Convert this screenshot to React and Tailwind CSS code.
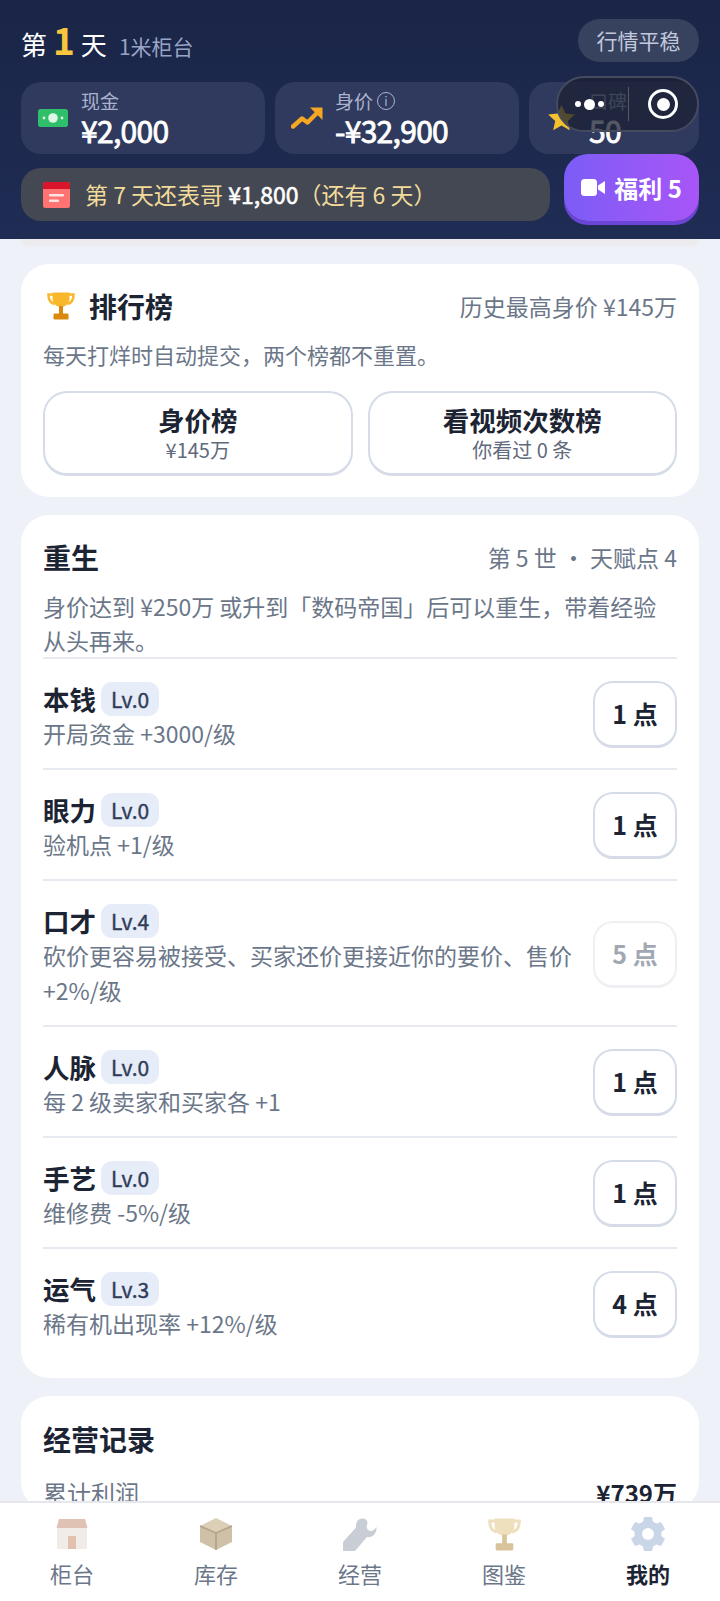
const FONT = '[font-family:"Noto_Sans_CJK_SC","Noto_Sans",sans-serif]'

function MoneyIcon() {
    return (
        <svg width="30" height="18" viewBox="0 0 30 18">
            <rect width="30" height="18" rx="2.5" fill="#2fbf6b" />
            <circle cx="15" cy="9" r="4.8" fill="#dff5e6" />
            <circle cx="6" cy="9" r="1.4" fill="#dff5e6" />
            <circle cx="24" cy="9" r="1.4" fill="#dff5e6" />
        </svg>
    )
}

function TrendIcon() {
    return (
        <svg width="32" height="22" viewBox="0 0 32 22" fill="none">
            <path d="M2 19.5 L11 11.5 L16.5 15.5 L27 5" stroke="#f5a623" strokeWidth="4.4" strokeLinecap="round" strokeLinejoin="round" />
            <path d="M19 0.5 H31.5 V13 Z" fill="#f5a623" />
        </svg>
    )
}

function StarIcon() {
    return (
        <svg width="27" height="26" viewBox="0 0 27 26">
            <path d="M13.5 0 L17.4 8.6 L26.8 9.6 L19.8 16 L21.8 25.3 L13.5 20.5 L5.2 25.3 L7.2 16 L0.2 9.6 L9.6 8.6 Z" fill="#f5c22e" />
        </svg>
    )
}

function CalendarIcon() {
    return (
        <svg width="27" height="26" viewBox="0 0 27 26">
            <rect y="0" width="27" height="26" rx="2.5" fill="#ff7373" />
            <path d="M0 2.5 A2.5 2.5 0 0 1 2.5 0 H24.5 A2.5 2.5 0 0 1 27 2.5 V7 H0 Z" fill="#d9142b" />
            <rect x="6" y="12" width="15" height="2.6" rx="1" fill="#ffe3e3" />
            <rect x="6" y="17.5" width="10" height="2.6" rx="1" fill="#ffe3e3" />
        </svg>
    )
}

function VideoIcon() {
    return (
        <svg width="24" height="17" viewBox="0 0 24 17">
            <rect width="16" height="17" rx="3.5" fill="#fff" />
            <path d="M17 6.5 L24 2 V15 L17 10.5 Z" fill="#fff" />
        </svg>
    )
}

function TrophyIcon({ cup = '#f9b82c', base = '#d98a0c', size = 28 }) {
    return (
        <svg width={size} height={size} viewBox="0 0 28 28" fill="none">
            <path d="M6 2.5 H1.5 C1.5 8 3 11 7.5 12 M22 2.5 H26.5 C26.5 8 25 11 20.5 12" stroke={cup} strokeWidth="2.6" />
            <path d="M5.5 0.5 H22.5 V6 C22.5 11.5 19 15 14 15 C9 15 5.5 11.5 5.5 6 Z" fill={cup} />
            <rect x="12" y="14" width="4" height="8" fill={base} />
            <rect x="6.5" y="21.5" width="15" height="6" rx="1.2" fill={base} />
        </svg>
    )
}

function StoreIcon() {
    return (
        <svg width="32" height="30" viewBox="0 0 32 30">
            <rect x="1" y="8" width="30" height="22" fill="#f2ece8" />
            <path d="M3 0 H29 L31.5 9 H0.5 Z" fill="#dfc2b4" />
            <rect x="12" y="17" width="8" height="13" fill="#e2c0ae" />
        </svg>
    )
}

function BoxIcon() {
    return (
        <svg width="32" height="32" viewBox="0 0 32 32">
            <path d="M16 0 L32 8 L16 15 L0 8 Z" fill="#dccfb8" />
            <path d="M0 8 L16 15 V32 L0 24 Z" fill="#cfc0a8" />
            <path d="M32 8 L16 15 V32 L32 24 Z" fill="#cfc0a8" />
            <path d="M0 8 L16 15 L32 8 M16 15 V32" stroke="#b3a48e" strokeWidth="1.8" fill="none" />
        </svg>
    )
}

function WrenchIcon() {
    return (
        <svg width="34" height="33" viewBox="0 0 34 33">
            <path d="M0 24 L13 9.5 C12.5 4 15 0.5 19.5 0.5 C23.5 0.5 25.5 3.5 24 7 C23 10 24.5 13 27.5 13 C30 13 32 11 33.5 9 C34 15 30 20 24 19 L12 33 H0 Z" fill="#c9ced6" />
        </svg>
    )
}

function GearIcon() {
    return (
        <svg width="34" height="34" viewBox="0 0 34 34">
            <path fillRule="evenodd" fill="#c9d6e8" d="M13 0 H21 L22 4.6 L25.4 6.5 L30 5 L34 12 L30.4 15 V19 L34 22 L30 29 L25.4 27.5 L22 29.4 L21 34 H13 L12 29.4 L8.6 27.5 L4 29 L0 22 L3.6 19 V15 L0 12 L4 5 L8.6 6.5 L12 4.6 Z M17 11 A6 6 0 1 0 17 23 A6 6 0 1 0 17 11 Z" />
        </svg>
    )
}

function Stat({ icon, label, value, info, className }) {
    return (
        <div className={`flex h-[72px] items-center rounded-[20px] bg-[#2f3a5e] ${className}`}>
            <div className="flex w-[60px] shrink-0 justify-center pl-[4px]">{icon}</div>
            <div className="flex flex-col">
                <div className="flex h-[24px] items-center gap-[4px] text-[19px] leading-[24px] text-[#a9b3cf]">
                    {label}
                    {info && (
                        <span className="flex h-[18px] w-[18px] items-center justify-center rounded-full border border-[#a9b3cf] text-[12px] leading-none">i</span>
                    )}
                </div>
                <div className="text-[30px] leading-[34px] font-normal tracking-[-0.7px] text-white [-webkit-text-stroke:0.8px_white]">{value}</div>
            </div>
        </div>
    )
}

function Skill({ name, lv, desc, cost, off, first }) {
    return (
        <div className={`flex items-center justify-between border-[#e6e9ef] pt-[23px] pb-[17px] ${first ? '' : 'border-t-2'}`}>
            <div className="min-w-0 flex-1 pr-[20px]">
                <div className="flex items-center gap-[5px]">
                    <span className="text-[26.5px] leading-[34px] font-bold text-[#1c2433]">{name}</span>
                    <span className="rounded-[11px] bg-[#e6ecf8] px-[10px] text-[21px] leading-[34px] font-normal text-[#2f3c5a] [-webkit-text-stroke:0.4px_#2f3c5a]">{lv}</span>
                </div>
                <div className="text-[23px] leading-[35px] text-[#6b7789]">{desc}</div>
            </div>
            <button className={`-mt-[4px] h-[67px] w-[84px] shrink-0 rounded-[20px] bg-white text-[25px] font-bold ${off ? 'border-2 border-b-[3px] border-[#eef0f4] text-[#a2a8b2]' : 'border-2 border-b-[3px] border-[#d6dce7] text-[#1c2433]'}`}>
                {cost}
            </button>
        </div>
    )
}

function RankBtn({ title, sub }) {
    return (
        <button className="flex h-[85px] flex-1 flex-col items-center justify-center rounded-[24px] border-2 border-b-[3px] border-[#d6dce7] bg-white">
            <span className="text-[26.5px] leading-[34px] font-bold text-[#1c2433]">{title}</span>
            <span className="text-[20px] leading-[26px] text-[#5f6a7c]">{sub}</span>
        </button>
    )
}

function Tab({ icon, label, active }) {
    return (
        <div className="flex flex-1 flex-col items-center">
            <div className="flex h-[36px] items-center justify-center">{icon}</div>
            <span className={`mt-[6px] text-[22px] leading-[30px] ${active ? 'font-bold text-[#1c2433]' : 'text-[#6b7789]'}`}>{label}</span>
        </div>
    )
}

const skills = [
    { name: '本钱', lv: 'Lv.0', desc: '开局资金 +3000/级', cost: '1 点' },
    { name: '眼力', lv: 'Lv.0', desc: '验机点 +1/级', cost: '1 点' },
    { name: '口才', lv: 'Lv.4', desc: '砍价更容易被接受、买家还价更接近你的要价、售价 +2%/级', cost: '5 点', off: true },
    { name: '人脉', lv: 'Lv.0', desc: '每 2 级卖家和买家各 +1', cost: '1 点' },
    { name: '手艺', lv: 'Lv.0', desc: '维修费 -5%/级', cost: '1 点' },
    { name: '运气', lv: 'Lv.3', desc: '稀有机出现率 +12%/级', cost: '4 点' },
]

export default function App() {
    return (
        <div className={`relative flex h-[1601px] w-[720px] flex-col overflow-hidden bg-[#eef1f8] ${FONT}`}>
            <header className="relative z-10 h-[239px] shrink-0 bg-gradient-to-b from-[#1a2547] to-[#1f2c54] px-[21px] pt-[19px]">
                <div className="flex h-[43px] items-center justify-between">
                    <div className="flex items-baseline text-white">
                        <span className="text-[26px]">第</span>
                        <span className="mx-[6px] text-[37px] leading-[43px] font-bold text-[#f8c63c]">1</span>
                        <span className="text-[26px]">天</span>
                        <span className="ml-[12px] text-[21px] text-[#98a4c4]">1米柜台</span>
                    </div>
                    <div className="flex h-[43px] w-[121px] items-center justify-center rounded-full bg-[#37425f] text-[21px] text-[#c2c9dc]">行情平稳</div>
                </div>
                <div className="mt-[20px] flex gap-[10px]">
                    <Stat className="w-[244px]" icon={<MoneyIcon />} label="现金" value="¥2,000" />
                    <Stat className="w-[244px]" icon={<TrendIcon />} label="身价" value="-¥32,900" info />
                    <Stat className="flex-1" icon={<StarIcon />} label="口碑" value="50" />
                </div>
                <div className="flex items-start gap-[14px]">
                    <div className="mt-[14px] flex h-[53px] w-[529px] items-center rounded-[20px] bg-[#444852] pl-[22px]">
                        <CalendarIcon />
                        <span className="ml-[15px] text-[23px] text-[#f3dc9b]">
                            第 7 天还表哥 <b className="font-normal text-white [-webkit-text-stroke:0.6px_white]">¥1,800</b>（还有 6 天）
                        </span>
                    </div>
                    <button className="flex h-[67px] flex-1 items-center justify-center gap-[9px] rounded-[24px] bg-gradient-to-r from-[#7c5cf6] to-[#a855f7] text-[24px] font-bold text-white shadow-[0_4px_0_#6a45d6]">
                        <VideoIcon />
                        福利 5
                    </button>
                </div>
            </header>

            <main className="flex min-h-0 flex-1 flex-col gap-[18px] overflow-hidden px-[21px]">
                <div className="h-[7px] shrink-0 rounded-b-[20px] bg-[#ececee]" />

                <section className="shrink-0 rounded-[28px] bg-white px-[22px] pt-[22px] pb-[21px]">
                    <div className="flex h-[40px] items-center justify-between">
                        <div className="flex items-center gap-[14px]">
                            <span className="pl-[4px]"><TrophyIcon /></span>
                            <h2 className="text-[28px] font-bold text-[#1c2433]">排行榜</h2>
                        </div>
                        <span className="text-[23px] text-[#6b7789]">历史最高身价 ¥145万</span>
                    </div>
                    <p className="mt-[11px] text-[22px] leading-[34px] text-[#6b7789]">每天打烊时自动提交，两个榜都不重置。</p>
                    <div className="mt-[20px] flex gap-[15px]">
                        <RankBtn title="身价榜" sub="¥145万" />
                        <RankBtn title="看视频次数榜" sub="你看过 0 条" />
                    </div>
                </section>

                <section className="shrink-0 rounded-[28px] bg-white px-[22px] pt-[22px] pb-[20px]">
                    <div className="flex h-[40px] items-center justify-between">
                        <h2 className="text-[28px] font-bold text-[#1c2433]">重生</h2>
                        <span className="text-[23px] text-[#6b7789]">第 5 世 · 天赋点 4</span>
                    </div>
                    <p className="mt-[12px] text-[23px] leading-[34px] text-[#6b7789]">身价达到 ¥250万 或升到「数码帝国」后可以重生，带着经验从头再来。</p>
                    <div className="border-t-2 border-[#e6e9ef]">
                        {skills.map((s, i) => (
                            <Skill key={s.name} {...s} first={i === 0} />
                        ))}
                    </div>
                </section>

                <section className="shrink-0 rounded-[28px] bg-white px-[22px] pt-[22px]">
                    <h2 className="text-[28px] leading-[42px] font-bold text-[#1c2433]">经营记录</h2>
                    <div className="mt-[16px] flex items-center justify-between">
                        <span className="text-[24px] leading-[34px] text-[#6b7789]">累计利润</span>
                        <span className="text-[24px] leading-[34px] font-bold text-[#1c2433]">¥739万</span>
                    </div>
                </section>
            </main>

            <nav className="flex h-[100px] shrink-0 border-t-2 border-[#e5e7ec] bg-white pt-[13px]">
                <Tab icon={<StoreIcon />} label="柜台" />
                <Tab icon={<BoxIcon />} label="库存" />
                <Tab icon={<WrenchIcon />} label="经营" />
                <Tab icon={<TrophyIcon cup="#eedfbd" base="#d8c39b" size={33} />} label="图鉴" />
                <Tab icon={<GearIcon />} label="我的" active />
            </nav>

            {/* mini program capsule floats over the header */}
            <div className="absolute top-[76px] left-[556px] z-20 flex h-[56px] w-[143px] items-center rounded-full border-2 border-[#454b5e] bg-[#1b2033]/75">
                <div className="flex w-[70px] items-center justify-center gap-[3px] pr-[8px]">
                    <span className="h-[6px] w-[6px] rounded-full bg-white" />
                    <span className="h-[11px] w-[11px] rounded-full bg-white" />
                    <span className="h-[6px] w-[6px] rounded-full bg-white" />
                </div>
                <div className="h-[34px] w-px bg-[#555b6c]" />
                <div className="flex flex-1 items-center justify-center">
                    <span className="flex h-[30px] w-[30px] items-center justify-center rounded-full border-[3px] border-white">
                        <span className="h-[13px] w-[13px] rounded-full bg-white" />
                    </span>
                </div>
            </div>
        </div>
    )
}
